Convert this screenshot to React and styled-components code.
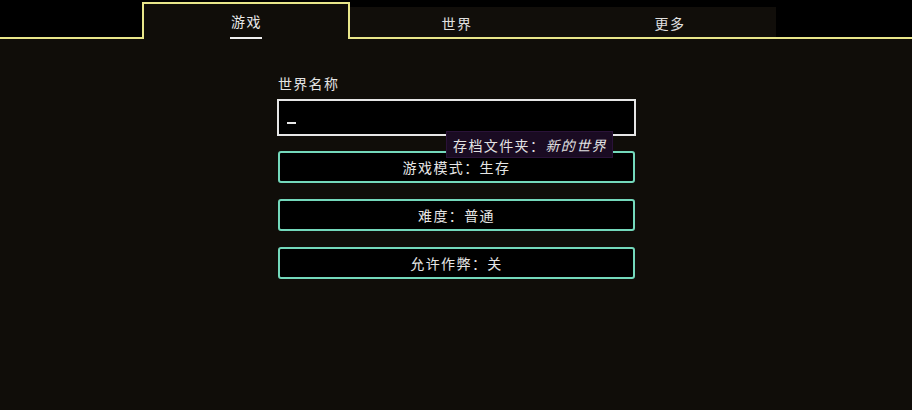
import React from "react";
import styled, { createGlobalStyle } from "styled-components";

const Global = createGlobalStyle`
  html, body { margin: 0; padding: 0; background: #100d09; }
  body { font-family: "Noto Sans CJK SC", "Noto Sans", sans-serif; color: #e4e4e4; }
  #root { width: 912px; height: 410px; overflow: hidden; }
`;

const YELLOW = "#e9e68a";
const TEAL = "#74d8bb";

const Page = styled.div`
  width: 912px;
  height: 410px;
  background: #100d09;
  position: relative;
`;

const Header = styled.div`
  display: flex;
  align-items: flex-end;
  height: 39px;
  background: #000;
`;

const Spacer = styled.div`
  width: ${(p) => p.$w || "auto"};
  flex: ${(p) => (p.$grow ? 1 : "none")};
  height: 0;
  border-bottom: 2px solid ${YELLOW};
`;

const ActiveTab = styled.div`
  box-sizing: border-box;
  width: 208px;
  height: 37px;
  border: 2px solid ${YELLOW};
  border-bottom: none;
  background: #100d09;
  display: flex;
  justify-content: center;
  align-items: flex-end;
`;

const ActiveLabel = styled.span`
  font-size: 14px;
  line-height: 16px;
  letter-spacing: 1.5px;
  padding: 0 0 8px 1px;
  border-bottom: 2px solid #f0f0f0;
  color: #e8e8e8;
`;

const TabGroup = styled.div`
  display: flex;
  background: #110e0a;
  border-bottom: 2px solid ${YELLOW};
`;

const Tab = styled.div`
  width: ${(p) => p.$w}px;
  height: 30px;
  display: flex;
  justify-content: center;
  align-items: center;
  padding-top: 2px;
  box-sizing: border-box;
  font-size: 14px;
  letter-spacing: 1.5px;
  color: #e0e0e0;
`;

const Content = styled.div`
  width: 359px;
  margin: 36px 0 0 277px;
  display: flex;
  flex-direction: column;
`;

const Label = styled.div`
  font-size: 14px;
  line-height: 16px;
  letter-spacing: 1.3px;
  padding-left: 1px;
  margin-bottom: 8px;
  color: #e4e4e4;
`;

const Field = styled.div`
  box-sizing: border-box;
  height: 37px;
  border: 2px solid #e6e6e6;
  background: #000;
  display: flex;
  align-items: flex-end;
  padding: 0 0 10px 8px;
  margin-bottom: 15px;
`;

const Caret = styled.span`
  display: block;
  width: 9px;
  height: 2px;
  background: #e8e8e8;
`;

const Buttons = styled.div`
  display: flex;
  flex-direction: column;
  gap: 16px;
  padding: 0 1px;
`;

const Button = styled.div`
  box-sizing: border-box;
  height: 32px;
  border: 2px solid ${TEAL};
  border-radius: 3px;
  background: #000;
  display: flex;
  justify-content: center;
  align-items: center;
  font-size: 14px;
  letter-spacing: 1.4px;
  color: #e6e6e6;
`;

const Tooltip = styled.div`
  position: absolute;
  left: 446px;
  top: 131px;
  width: 167px;
  height: 27px;
  box-sizing: border-box;
  background: #1a0b22;
  border: 1px solid #2a1238;
  display: flex;
  align-items: center;
  padding-left: 6px;
  font-size: 14px;
  letter-spacing: 1.4px;
  color: #e2e2e2;
  white-space: nowrap;
`;

const Italic = styled.span`
  font-style: italic;
`;

export default function App() {
  return (
    <>
      <Global />
      <Page>
        <Header>
          <Spacer $w="142px" />
          <ActiveTab>
            <ActiveLabel>游戏</ActiveLabel>
          </ActiveTab>
          <TabGroup>
            <Tab $w={214}>世界</Tab>
            <Tab $w={212}>更多</Tab>
          </TabGroup>
          <Spacer $grow />
        </Header>
        <Content>
          <Label>世界名称</Label>
          <Field>
            <Caret />
          </Field>
          <Buttons>
            <Button>游戏模式：生存</Button>
            <Button>难度：普通</Button>
            <Button>允许作弊：关</Button>
          </Buttons>
        </Content>
        <Tooltip>
          存档文件夹：<Italic>新的世界</Italic>
        </Tooltip>
      </Page>
    </>
  );
}
